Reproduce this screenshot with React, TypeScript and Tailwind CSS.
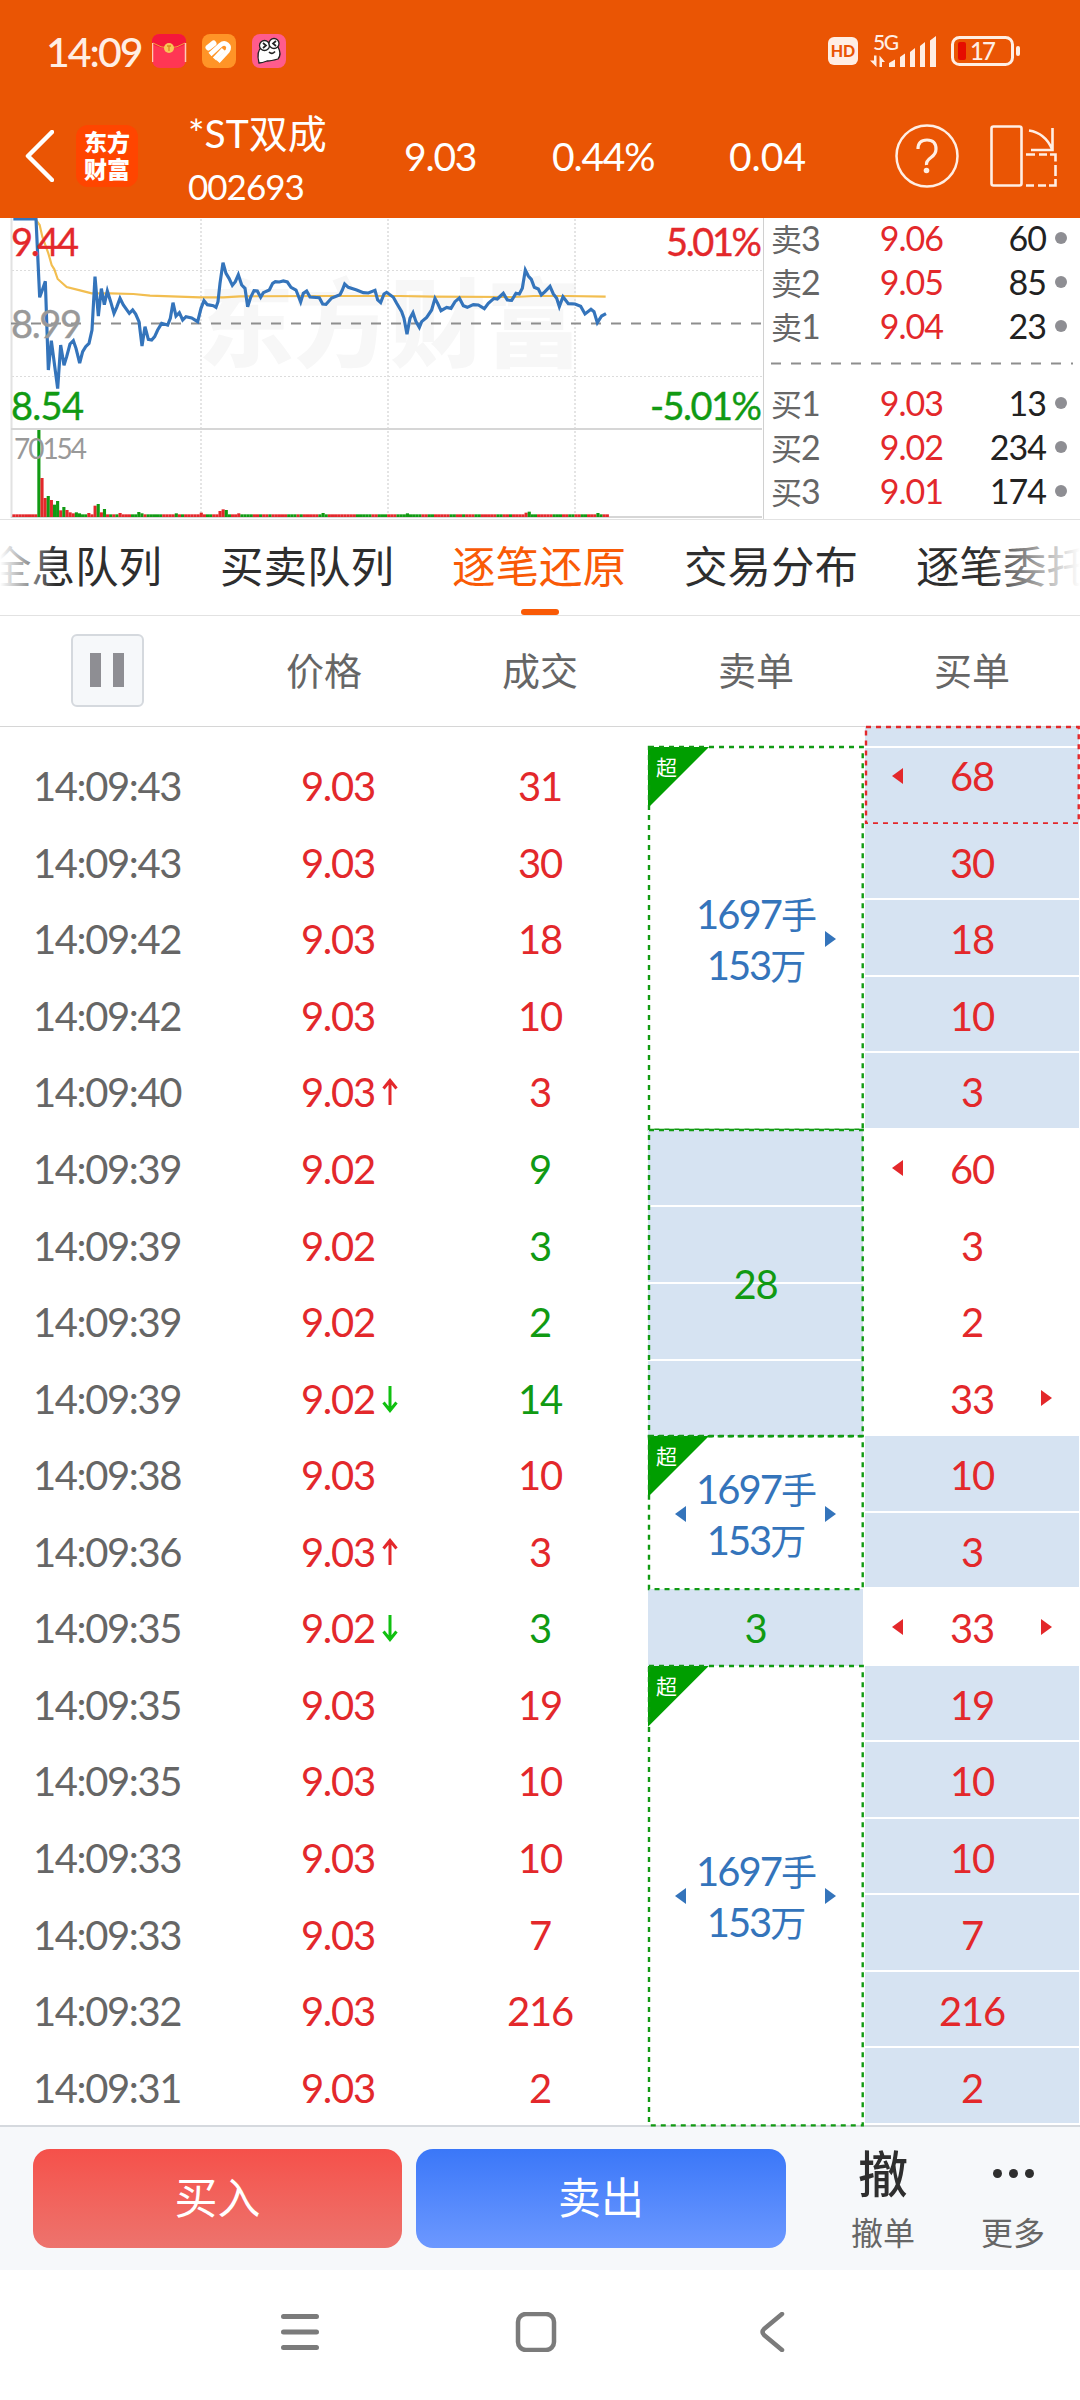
import type { ReactNode } from "react";
import clsx from "clsx";

const PRICE_LINE =
  "40,27 108,27 119,262 127,240 136,214 145,480 154,392 173,536 182,405 192,466 200,440 210,402 220,392 228,415 239,459 248,425 257,410 267,400 276,360 285,200 295,318 304,236 313,284 322,243 332,275 342,310 350,292 360,265 370,285 388,310 398,300 407,312 417,335 426,408 435,350 445,388 455,390 464,380 473,360 485,340 503,345 511,325 519,278 528,318 538,308 548,330 558,320 575,324 593,335 603,295 612,272 622,284 640,287 648,292 654,275 660,220 669,158 678,190 687,205 697,226 706,215 715,194 725,225 735,235 743,290 752,262 762,242 772,243 782,262 790,248 808,240 818,220 826,215 838,216 850,213 862,216 873,232 888,240 902,276 910,250 920,243 930,261 958,263 968,282 978,283 995,264 1020,254 1027,240 1034,222 1045,232 1070,240 1090,248 1105,249 1125,241 1133,270 1142,278 1152,252 1160,247 1180,262 1190,280 1205,305 1212,325 1221,373 1230,325 1239,308 1248,335 1258,352 1265,335 1280,322 1295,300 1305,265 1313,280 1323,302 1340,292 1353,295 1365,275 1378,264 1390,287 1402,292 1420,284 1435,285 1453,296 1465,280 1482,265 1492,267 1510,250 1522,270 1535,271 1548,250 1558,252 1567,235 1576,180 1585,198 1594,208 1603,232 1615,237 1624,255 1635,245 1650,229 1660,252 1670,265 1678,290 1689,260 1705,281 1725,282 1742,289 1755,312 1773,298 1782,305 1792,338 1805,318 1818,311";

const AVG_LINE =
  "108,30 119,45 127,80 145,130 155,165 163,178 173,207 200,231 240,241 275,250 330,250 400,252 450,257 600,262 670,262 720,259 1000,258 1200,258 1300,260 1540,261 1600,258 1700,258 1817,260";

// minutes whose volume stands out, everything else is a flat bar
const VOLUME: Record<number, [number, "r" | "g"]> = {
  8: [261, "g"], 9: [117, "r"], 10: [57, "r"], 11: [63, "g"], 12: [51, "r"], 13: [37, "g"],
  14: [48, "g"], 15: [20, "r"], 16: [30, "g"], 17: [21, "r"], 18: [14, "r"], 19: [11, "r"],
  20: [14, "g"], 21: [11, "g"], 24: [12, "r"], 26: [34, "r"], 27: [39, "g"], 28: [14, "r"],
  29: [24, "g"], 34: [12, "r"], 40: [15, "g"], 41: [11, "g"], 52: [11, "g"], 60: [13, "r"],
  66: [18, "r"], 67: [23, "r"], 68: [21, "g"], 72: [11, "r"], 99: [12, "g"], 126: [11, "g"],
  164: [13, "r"], 165: [16, "g"], 187: [12, "g"],
};
const FLAT =
  "rrrrrrrrgrrgrgggrgrrrrgggrrrggrgrggrrrgggrrgggggrrrrrrgrrrrrrrggrrrgggrrrggggrrgrrgrrrrrgggrgrrrrrgggrrrrrrrrrgggggrrgggrrrggggggggrrggrrrrrggrrgrrrggrrrrrggrrgrrrrrgggrrrrrgggrrggrrggrrrggrrr";

const MINUTES = Array.from({ length: 191 }, (_, i) => {
  const [h, c] = VOLUME[i] ?? [8, FLAT[i]];
  return { x: 37 + i * 9.37, h, color: c === "r" ? "#e3282b" : "#119a13" };
});

type Level = { name: string; price: string; qty: string };

const SELLS: Level[] = [
  { name: "卖3", price: "9.06", qty: "60" },
  { name: "卖2", price: "9.05", qty: "85" },
  { name: "卖1", price: "9.04", qty: "23" },
];
const BUYS: Level[] = [
  { name: "买1", price: "9.03", qty: "13" },
  { name: "买2", price: "9.02", qty: "234" },
  { name: "买3", price: "9.01", qty: "174" },
];

type Tick = { time: string; price: string; dir?: "up" | "down"; vol: string; green?: boolean };

const TICKS: Tick[] = [
  { time: "14:09:43", price: "9.03", vol: "31" },
  { time: "14:09:43", price: "9.03", vol: "30" },
  { time: "14:09:42", price: "9.03", vol: "18" },
  { time: "14:09:42", price: "9.03", vol: "10" },
  { time: "14:09:40", price: "9.03", dir: "up", vol: "3" },
  { time: "14:09:39", price: "9.02", vol: "9", green: true },
  { time: "14:09:39", price: "9.02", vol: "3", green: true },
  { time: "14:09:39", price: "9.02", vol: "2", green: true },
  { time: "14:09:39", price: "9.02", dir: "down", vol: "14", green: true },
  { time: "14:09:38", price: "9.03", vol: "10" },
  { time: "14:09:36", price: "9.03", dir: "up", vol: "3" },
  { time: "14:09:35", price: "9.02", dir: "down", vol: "3", green: true },
  { time: "14:09:35", price: "9.03", vol: "19" },
  { time: "14:09:35", price: "9.03", vol: "10" },
  { time: "14:09:33", price: "9.03", vol: "10" },
  { time: "14:09:33", price: "9.03", vol: "7" },
  { time: "14:09:32", price: "9.03", vol: "216" },
  { time: "14:09:31", price: "9.03", vol: "2" },
];

type Order = { vol: string; fill?: boolean; left?: boolean; right?: boolean };

const BUY_ORDERS: Order[] = [
  { vol: "30", fill: true },
  { vol: "18", fill: true },
  { vol: "10", fill: true },
  { vol: "3", fill: true },
  { vol: "60", left: true },
  { vol: "3" },
  { vol: "2" },
  { vol: "33", right: true },
  { vol: "10", fill: true },
  { vol: "3", fill: true },
  { vol: "33", left: true, right: true },
  { vol: "19", fill: true },
  { vol: "10", fill: true },
  { vol: "10", fill: true },
  { vol: "7", fill: true },
  { vol: "216", fill: true },
  { vol: "2", fill: true },
];

function StatusBar() {
  return (
    <div className="flex h-[96px] items-center pt-1.5 pl-[46px] text-[#ffeee4]">
      <span className="w-[106px] text-[41px] leading-none font-medium tracking-[-2px]">14:09</span>
      <svg width="134" height="34" viewBox="0 0 134 34">
        <rect width="34" height="34" rx="8" fill="#ff3654" />
        <path d="M0 8Q0 0 8 0H26Q34 0 34 8V10Q17 19 0 10Z" fill="#f5173c" />
        <path d="M1 9Q17 19 33 9" fill="none" stroke="#f2a13f" strokeWidth="1" />
        <path d="M.5 9V28M33.500 9V28" stroke="#ffc9b5" strokeWidth="1.500" />
        <circle cx="17" cy="14" r="5" fill="#f8c657" />
        <path d="M15 12h4M17 12v5" stroke="#d98a1f" strokeWidth="1.300" />
        <rect x="50" width="34" height="34" rx="8" fill="#ff9427" />
        <g fill="none" stroke="#fff" strokeWidth="4.600">
          <path d="M56.500 13.500L61.500 9.500" strokeWidth="6" strokeLinecap="round" />
          <path d="M58 20.500L68.500 11Q72 8 75 10.500T75.500 17L66 27.500" />
          <path d="M62.500 25L71.500 15.500" />
        </g>
        <rect x="100" width="34" height="34" rx="8" fill="#ff5c8d" />
        <path
          d="M107 29Q104 17 110 13Q118 8 126 13Q130 20 126 25Q119 27 115 27Q110 29 107 29Z"
          fill="#fff"
          stroke="#222"
          strokeWidth="1.300"
        />
        <g fill="#fff" stroke="#222" strokeWidth="1.300">
          <circle cx="112.500" cy="11.500" r="5" />
          <circle cx="122" cy="9.500" r="5" />
          <path d="M111 9l3 2.500-3 2.500M124 7l-3 2.500 3 2.500M117 18q3 3 6-.5" fill="none" strokeWidth="1.700" />
        </g>
      </svg>
      <div className="ml-[542px] flex h-[28px] w-[30px] items-center justify-center rounded-md bg-[#ffeee4] text-[16px] font-black text-[#ea5504]">
        HD
      </div>
      <svg className="ml-3 overflow-visible" width="68" height="34" viewBox="0 0 68 34" fill="currentColor">
        <text x="3" y="16" fontSize="21" fontWeight="500" textLength="26" fontFamily="Lato">5G</text>
        <path d="M4 21.500h2.500V33L0 26.500h4ZM9.500 21.500L15 28h-3v5H9.500Z" />
        <path d="M19 29l6-3.500V33h-6ZM30 23l5-3.500V33h-5ZM40 18l5-4v19h-5ZM50 12l5-4v25h-5ZM60 6.500l6-4.500V33h-6Z" />
      </svg>
      <svg className="ml-[13px]" width="70" height="32" viewBox="0 0 70 32">
        <rect x="1.500" y="2.500" width="60" height="27" rx="7" fill="none" stroke="#ffeee4" strokeWidth="3" />
        <rect x="65" y="11" width="4" height="10" rx="2" fill="#ffeee4" />
        <rect x="7" y="7" width="8" height="18" rx="2" fill="#e60c00" />
        <text x="19" y="24.500" fontSize="24" fontWeight="500" letterSpacing="-2" fontFamily="Lato" fill="#ffeee4">17</text>
      </svg>
    </div>
  );
}

function Header() {
  return (
    <header className="h-[218px] bg-[#ea5504] text-white">
      <StatusBar />
      <div className="flex h-[120px] items-center pl-[25px]">
        <svg width="29" height="52" viewBox="0 0 29 52" fill="none" stroke="#fff" strokeWidth="4.500">
          <path d="M27 2L3 26l24 24" strokeLinecap="round" strokeLinejoin="round" />
        </svg>
        <div className="ml-[22px] flex size-[62px] flex-col items-center justify-center rounded-[12px] bg-[#ff4500] text-[23px] leading-[27px] font-black">
          <span>东方</span>
          <span>财富</span>
        </div>
        <div className="ml-[50px] flex w-[216px] flex-col gap-3.5 pt-1">
          <span className="text-[39px] leading-[40px] whitespace-nowrap">*ST双成</span>
          <span className="pt-px text-[35px] leading-[36px] tracking-[-1px]">002693</span>
        </div>
        <span className="w-[148px] text-[39px] leading-none tracking-[-1.2px]">9.03</span>
        <span className="w-[177px] text-[39px] leading-none tracking-[-1.2px]">0.44%</span>
        <span className="w-[166px] text-[39px] leading-none">0.04</span>
        <svg width="64" height="64" viewBox="0 0 64 64" fill="none" stroke="#ffeee4" strokeWidth="2.500">
          <circle cx="32" cy="32" r="30.500" />
          <path d="M23 25q0-9 9-9t9 9q0 5-5 8.500t-4.500 7.500" strokeWidth="3.200" />
          <circle cx="31.500" cy="46.500" r="2.800" fill="#ffeee4" stroke="none" />
        </svg>
        <svg className="ml-[31px]" width="67" height="64" viewBox="0 0 67 64" fill="none" stroke="#ffeee4" strokeWidth="2.600">
          <rect x="1.500" y="2.500" width="30" height="59" rx="2" />
          <path d="M39 6.500Q55 9 62 25M62.500 4v22H41" />
          <path d="M36 30.500h9M49 30.500h8M60 30.500h5.500v7M65.500 41v11M65.500 55v6.500H59M56 61.500h-8M44 61.500h-8" />
        </svg>
      </div>
    </header>
  );
}

function Chart() {
  return (
    <svg width="763" height="301" viewBox="0 218 763 301" fontFamily="Lato, 'Noto Sans CJK SC', sans-serif">
      <text x="390" y="359" fontSize="96" fontWeight="900" fill="#f7f7f7" textAnchor="middle">
        东方财富
      </text>
      <g stroke="#dcdcdc" strokeDasharray="2 2">
        <path d="M12 270.500H762M12 376.500H762" />
        <path d="M201 219V516M388 219V516M575 219V516" strokeWidth="1.500" />
      </g>
      <path d="M11.500 218V518" stroke="#e2e2e2" strokeWidth="2" />
      <path d="M11 429H762M11 517H762" stroke="#d6d6d6" strokeWidth="2" />
      <path d="M11 323.500H762" stroke="#8e8e8e" strokeWidth="2" strokeDasharray="10 10" />
      <g transform="translate(0 210) scale(.33333)" fill="none">
        {MINUTES.map((m) => (
          <rect key={m.x} x={m.x} y={921 - m.h} width="9.400" height={m.h} fill={m.color} />
        ))}
        <polyline points={AVG_LINE} stroke="#f2be50" strokeWidth="6.500" />
        <polyline points={PRICE_LINE} stroke="#3474bb" strokeWidth="9.500" />
      </g>
      <g fontSize="38" strokeWidth=".4">
        <text x="11" y="255.500" fill="#e3282b" stroke="#e3282b" textLength="68">9.44</text>
        <text x="11" y="337.500" fill="#999" stroke="#999" textLength="71">8.99</text>
        <text x="11" y="419.500" fill="#119a13" stroke="#119a13" textLength="73">8.54</text>
        <text x="666" y="255.500" fill="#e3282b" stroke="#e3282b" textLength="96">5.01%</text>
        <text x="650" y="419.500" fill="#119a13" stroke="#119a13" textLength="112">-5.01%</text>
        <text x="14" y="459" fontSize="28" fill="#999" textLength="73">70154</text>
      </g>
    </svg>
  );
}

function BookRow({ level }: { level: Level }) {
  return (
    <div className="flex h-11 items-center text-[34px] leading-none tracking-[-1px]">
      <span className="w-[60px] text-[#666]"><span className="text-[31px]">{level.name[0]}</span>{level.name[1]}</span>
      <span className="w-[112px] text-right text-[#e3282b]">{level.price}</span>
      <span className="w-[103px] text-right text-[#222]">{level.qty}</span>
      <span className="ml-[9px] size-3 rounded-full bg-[#8e8e93]" />
    </div>
  );
}

function OrderBook() {
  return (
    <div className="flex-1 border-l border-[#d0d0d0] pl-[7px]">
      <div className="-mt-0.5">
        {SELLS.map((l) => <BookRow key={l.name} level={l} />)}
      </div>
      <svg className="block" width="302" height="33" stroke="#8e8e8e" strokeWidth="2">
        <path d="M0 15.500H302" strokeDasharray="10 10" />
      </svg>
      {BUYS.map((l) => <BookRow key={l.name} level={l} />)}
    </div>
  );
}

function Tabs() {
  const tabs = ["全息队列", "买卖队列", "逐笔还原", "交易分布", "逐笔委托"];
  return (
    <nav className="relative flex h-[97px] justify-center gap-14 overflow-hidden border-t border-b border-[#e2e2e2] text-[43.500px] text-[#2e2e2e]">
      {tabs.map((t, i) => (
        <div key={t} className={clsx("relative flex w-44 shrink-0 justify-center leading-[92px] whitespace-nowrap", i === 2 && "text-[#f95a06]")}>
          <span className="-ml-0.5">{t}</span>
          {i === 2 && <span className="absolute bottom-0 h-1.5 w-[38px] rounded-full bg-[#f95a06]" />}
        </div>
      ))}
      <div className="absolute inset-y-0 left-0 w-14 bg-linear-to-r from-white to-transparent" />
      <div className="absolute inset-y-0 right-0 w-24 bg-linear-to-l from-white to-transparent" />
    </nav>
  );
}

function ColumnHeads() {
  return (
    <div className="grid h-[111px] grid-cols-5 place-items-center border-b border-[#d6d6d6] pb-0.5 text-[38px] text-[#666]">
      <button className="flex size-[73px] -translate-x-px items-center justify-center gap-3 rounded-md border-2 border-[#d5d9de] bg-[#f6f8fa]">
        <i className="h-[34px] w-[11px] bg-[#8e8e93]" />
        <i className="h-[34px] w-[11px] bg-[#8e8e93]" />
      </button>
      <span>价格</span>
      <span>成交</span>
      <span>卖单</span>
      <span>买单</span>
    </div>
  );
}

function Dashes({ color }: { color: string }) {
  return (
    <svg className="pointer-events-none absolute inset-0 size-full overflow-visible" fill="none">
      <rect x="1" y="0" width="99.400%" height="100%" stroke={color} strokeWidth="2.400" strokeDasharray="5 5" />
    </svg>
  );
}

function Arrows({ left, right }: { left?: boolean; right?: boolean }) {
  return (
    <>
      {left && (
        <svg className="absolute top-1/2 left-[27px] -mt-[7px]" width="11" height="16" fill="currentColor">
          <path d="M11 0v16L0 8Z" />
        </svg>
      )}
      {right && (
        <svg className="absolute top-1/2 right-[27px] -mt-[7px]" width="11" height="16" fill="currentColor">
          <path d="M0 0v16l11-8Z" />
        </svg>
      )}
    </>
  );
}

function SuperOrder({ className, left }: { className: string; left?: boolean }) {
  return (
    <div className={clsx("relative flex flex-col items-center justify-center pt-1 text-[40px] leading-[50px] tracking-[-2px] text-[#3474bb]", className)}>
      <div className="absolute top-0 left-0 size-[61px] bg-[#009e00] pt-[8px] pl-[8px] text-[21px] leading-6 tracking-normal text-white [clip-path:polygon(0_0,100%_0,0_100%)]">
        超
      </div>
      <span>1697<span className="text-[36px]">手</span></span>
      <span>153<span className="text-[36px]">万</span></span>
      <Arrows left={left} right />
      <Dashes color="#119a13" />
    </div>
  );
}

function PriceArrow({ dir }: { dir: "up" | "down" }) {
  return (
    <svg
      className={clsx("absolute left-full ml-[7px]", dir === "up" ? "text-[#e3282b]" : "rotate-180 text-[#10c010]")}
      width="16" height="28" viewBox="0 0 16 28" fill="none" stroke="currentColor" strokeWidth="3"
    >
      <path d="M8 27V3M1.500 10.500L8 2.500l6.500 8" />
    </svg>
  );
}

function TickTable() {
  return (
    <div className="relative h-[1398px] pt-5 text-[40px] leading-none tracking-[-1.200px]">
      <div className="grid h-[1378px] grid-cols-5 grid-rows-18">
        <div className="col-span-3 col-start-1 row-span-18 row-start-1 grid grid-rows-18">
          {TICKS.map((t, i) => (
            <div key={i} className="grid grid-cols-3 place-items-center pt-0.5 text-[#e3282b]">
              <span className="-ml-0.5 tracking-[-1.400px] text-[#666]">{t.time}</span>
              <span className="relative left-[14px] flex items-center">
                {t.price}
                {t.dir && <PriceArrow dir={t.dir} />}
              </span>
              <span className={clsx(t.green && "text-[#119a13]")}>{t.vol}</span>
            </div>
          ))}
        </div>
        <div className="col-start-4 row-span-18 row-start-1 grid grid-rows-18 pr-px">
          <SuperOrder className="row-span-5" />
          <div className="relative row-span-4 grid grid-rows-4 gap-0.5 text-[#119a13]">
            <i className="bg-[#d6e3f2]" />
            <i className="bg-[#d6e3f2]" />
            <i className="bg-[#d6e3f2]" />
            <i className="bg-[#d6e3f2]" />
            <span className="absolute inset-0 flex items-center justify-center pt-0.5">28</span>
            <Dashes color="#119a13" />
          </div>
          <SuperOrder className="row-span-2" left />
          <div className="flex items-center justify-center bg-[#d6e3f2] pt-0.5 text-[#119a13]">3</div>
          <SuperOrder className="row-span-6" left />
        </div>
        <div className="col-start-5 row-span-18 row-start-1 grid grid-rows-18 pr-px pl-px text-[#e3282b]">
          <div className="relative">
            {/* newest order runs up under the column heads */}
            <Filled className="absolute inset-x-0 -top-5 bottom-0 pt-0.5">
              <i className="absolute inset-x-0 top-[19px] h-0.5 bg-white" />
              68
              <Arrows left />
              <Dashes color="#e3282b" />
            </Filled>
          </div>
          {BUY_ORDERS.map((o, i) => (
            <div key={i} className={clsx("relative flex items-center justify-center border-b-2 border-white pt-1", o.fill && "bg-[#d6e3f2]")}>
              {o.vol}
              <Arrows left={o.left} right={o.right} />
            </div>
          ))}
        </div>
      </div>
    </div>
  );
}

function Filled({ className, children }: { className: string; children: ReactNode }) {
  return <div className={clsx("flex items-center justify-center bg-[#d6e3f2]", className)}>{children}</div>;
}

function ActionBar() {
  return (
    <div className="flex h-[145px] items-center border-t-2 border-[#d5d9de] bg-[#f6f8fa] pl-[33px] text-[43px] text-white">
      <button className="h-[99px] w-[369px] rounded-[17px] bg-linear-to-b from-[#f5504a] to-[#ed736d]">买入</button>
      <button className="ml-[14px] h-[99px] w-[370px] rounded-[17px] bg-linear-to-b from-[#3a77f8] to-[#6c98ff]">卖出</button>
      <div className="ml-[32px] flex w-[130px] flex-col items-center text-[#2e2e2e]">
        <span className="pt-0.5 text-[50px] leading-[56px] font-medium">撤</span>
        <span className="mt-2.5 text-[32px] leading-[42px] text-[#666]">撤单</span>
      </div>
      <div className="flex w-[130px] flex-col items-center text-[#2e2e2e]">
        <div className="flex h-[58px] items-center gap-[7px] pt-0.5">
          <i className="size-[9px] rounded-full bg-[#2e2e2e]" />
          <i className="size-[9px] rounded-full bg-[#2e2e2e]" />
          <i className="size-[9px] rounded-full bg-[#2e2e2e]" />
        </div>
        <span className="mt-2.5 text-[32px] leading-[42px] text-[#666]">更多</span>
      </div>
    </div>
  );
}

function SystemNav() {
  return (
    <div className="flex h-[130px] pt-[42px] pl-[281px]">
      <svg width="504" height="40" viewBox="0 0 504 40" fill="none" stroke="#7b7b7b" strokeWidth="5" strokeLinecap="round" strokeLinejoin="round">
        <path d="M2.500 4.500h33M2.500 20h33M2.500 35.500h33" />
        <rect x="237" y="2" width="36" height="36" rx="8" strokeWidth="4.500" />
        <path d="M501 2L483 17q-3 3 0 6L501 38" strokeWidth="4.500" />
      </svg>
    </div>
  );
}

export default function App() {
  return (
    <div className="h-[2400px] w-[1080px] overflow-hidden bg-white font-[Lato,'Noto_Sans_CJK_SC',sans-serif]">
      <Header />
      <div className="flex h-[301px]">
        <Chart />
        <OrderBook />
      </div>
      <Tabs />
      <ColumnHeads />
      <TickTable />
      <ActionBar />
      <SystemNav />
    </div>
  );
}
